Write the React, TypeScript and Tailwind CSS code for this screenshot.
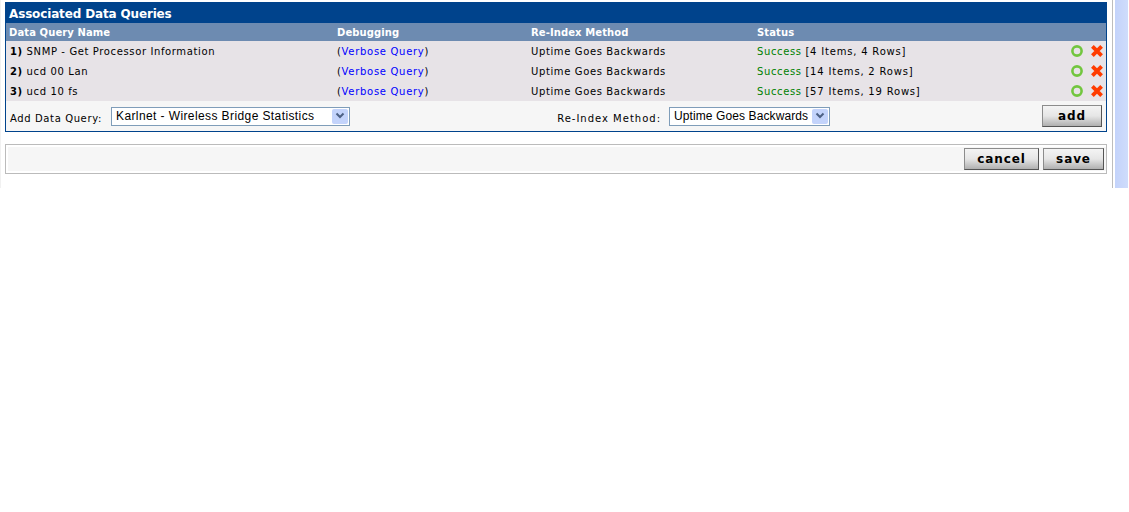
const rows = [
  { num: '1)', name: 'SNMP - Get Processor Information', stats: '[4 Items, 4 Rows]' },
  { num: '2)', name: 'ucd 00 Lan', stats: '[14 Items, 2 Rows]' },
  { num: '3)', name: 'ucd 10 fs', stats: '[57 Items, 19 Rows]' },
];

function GoIcon() {
  return (
    <svg width="12" height="12" viewBox="0 0 12 12">
      <circle cx="6" cy="6" r="4.6" fill="none" stroke="#72c63f" strokeWidth="2.6" />
    </svg>
  );
}

function DeleteIcon() {
  return (
    <svg width="12" height="12" viewBox="0 0 12 12">
      <path d="M1.4 1.4 L10.6 10.6 M10.6 1.4 L1.4 10.6" fill="none" stroke="#ff3c00" strokeWidth="3.8" />
    </svg>
  );
}

function Select({ value, width, tracking }: { value: string; width: string; tracking: string }) {
  return (
    <div className={`flex h-[19px] items-center justify-between border border-[#7f9db9] bg-white pl-[4px] pr-[1px] ${width}`}>
      <span className={`whitespace-nowrap font-['Liberation_Sans',sans-serif] text-[12px] text-black ${tracking}`}>{value}</span>
      <span className="flex h-[15px] w-[16px] items-center justify-center rounded-[2px] bg-[#c3d3fb]">
        <svg width="10" height="8" viewBox="0 0 10 8">
          <path d="M1.5 1.5 L5 5 L8.5 1.5" fill="none" stroke="#4d6185" strokeWidth="2" />
        </svg>
      </span>
    </div>
  );
}

function Button({ label, width }: { label: string; width: string }) {
  return (
    <div
      className={`flex h-[22px] items-center justify-center border border-t-[#8c8c8c] border-l-[#8c8c8c] border-r-[#555] border-b-[#555] bg-gradient-to-b from-[#f4f4f4] via-[#e6e6e6] to-[#b0b0b0] text-[12px] font-bold tracking-[0.9px] text-black ${width}`}
    >
      {label}
    </div>
  );
}

export default function App() {
  return (
    <div className="bg-white font-['DejaVu_Sans','Liberation_Sans',sans-serif] text-[10px] tracking-[0.62px] text-black">
      <div className="flex h-[188px]">
        <div className="w-[1111px] border-l border-[#f1f1f1] pt-[2px] pl-[4px] pr-[4px]">
          <div className="border border-[#00438c]">
            <div className="flex h-[20px] items-center bg-[#00438c] pl-[3px] pt-[2px] text-[12px] font-bold tracking-[-0.15px] text-white">
              Associated Data Queries
            </div>
            <div className="flex h-[18px] items-center bg-[#6d8bb1] text-[10px] font-bold tracking-[0.1px] text-white">
              <div className="w-[331px] pl-[3px]">Data Query Name</div>
              <div className="w-[194px]">Debugging</div>
              <div className="w-[226px]">Re-Index Method</div>
              <div>Status</div>
            </div>
            {rows.map((row) => (
              <div key={row.num} className="flex h-[20px] items-center bg-[#e7e3e7]">
                <div className="w-[331px] pl-[4px]">
                  <span className="font-bold">{row.num}</span> {row.name}
                </div>
                <div className="w-[194px] tracking-[0.7px]">
                  (<span className="text-[#0000ff]">Verbose Query</span>)
                </div>
                <div className="w-[226px]">Uptime Goes Backwards</div>
                <div className="flex-1">
                  <span className="text-[#008000]">Success</span> <span className="tracking-[0.8px]">{row.stats}</span>
                </div>
                <div className="flex items-center gap-[8px] pr-[3px]">
                  <GoIcon />
                  <DeleteIcon />
                </div>
              </div>
            ))}
            <div className="flex h-[30px] items-center bg-[#f6f6f6] pl-[4px] pr-[4px]">
              <div className="w-[101px] pt-[4px]">Add Data Query:</div>
              <Select value="Karlnet - Wireless Bridge Statistics" width="w-[239px]" tracking="tracking-[0.4px]" />
              <div className="w-[319px] pr-[8px] pt-[4px] text-right tracking-[1px]">Re-Index Method:</div>
              <Select value="Uptime Goes Backwards" width="w-[161px]" tracking="tracking-[0.1px]" />
              <div className="flex-1" />
              <Button label="add" width="w-[60px]" />
            </div>
          </div>
          <div className="mt-[12px] border border-[#bbbbbb] py-[2px] pl-[2px]">
            <div className="flex h-[24px] items-center justify-end gap-[4px] bg-[#f6f6f6] pr-[2px]">
              <Button label="cancel" width="w-[75px]" />
              <Button label="save" width="w-[61px]" />
            </div>
          </div>
        </div>
        <div className="w-[1px] bg-white" />
        <div className="w-[1px] bg-[#bdbdbd]" />
        <div className="w-[2px] bg-white" />
        <div className="flex-1 bg-gradient-to-r from-[#c3d3fb] to-[#cfdcfb]" />
        <div className="w-[1px] bg-white" />
      </div>
    </div>
  );
}
